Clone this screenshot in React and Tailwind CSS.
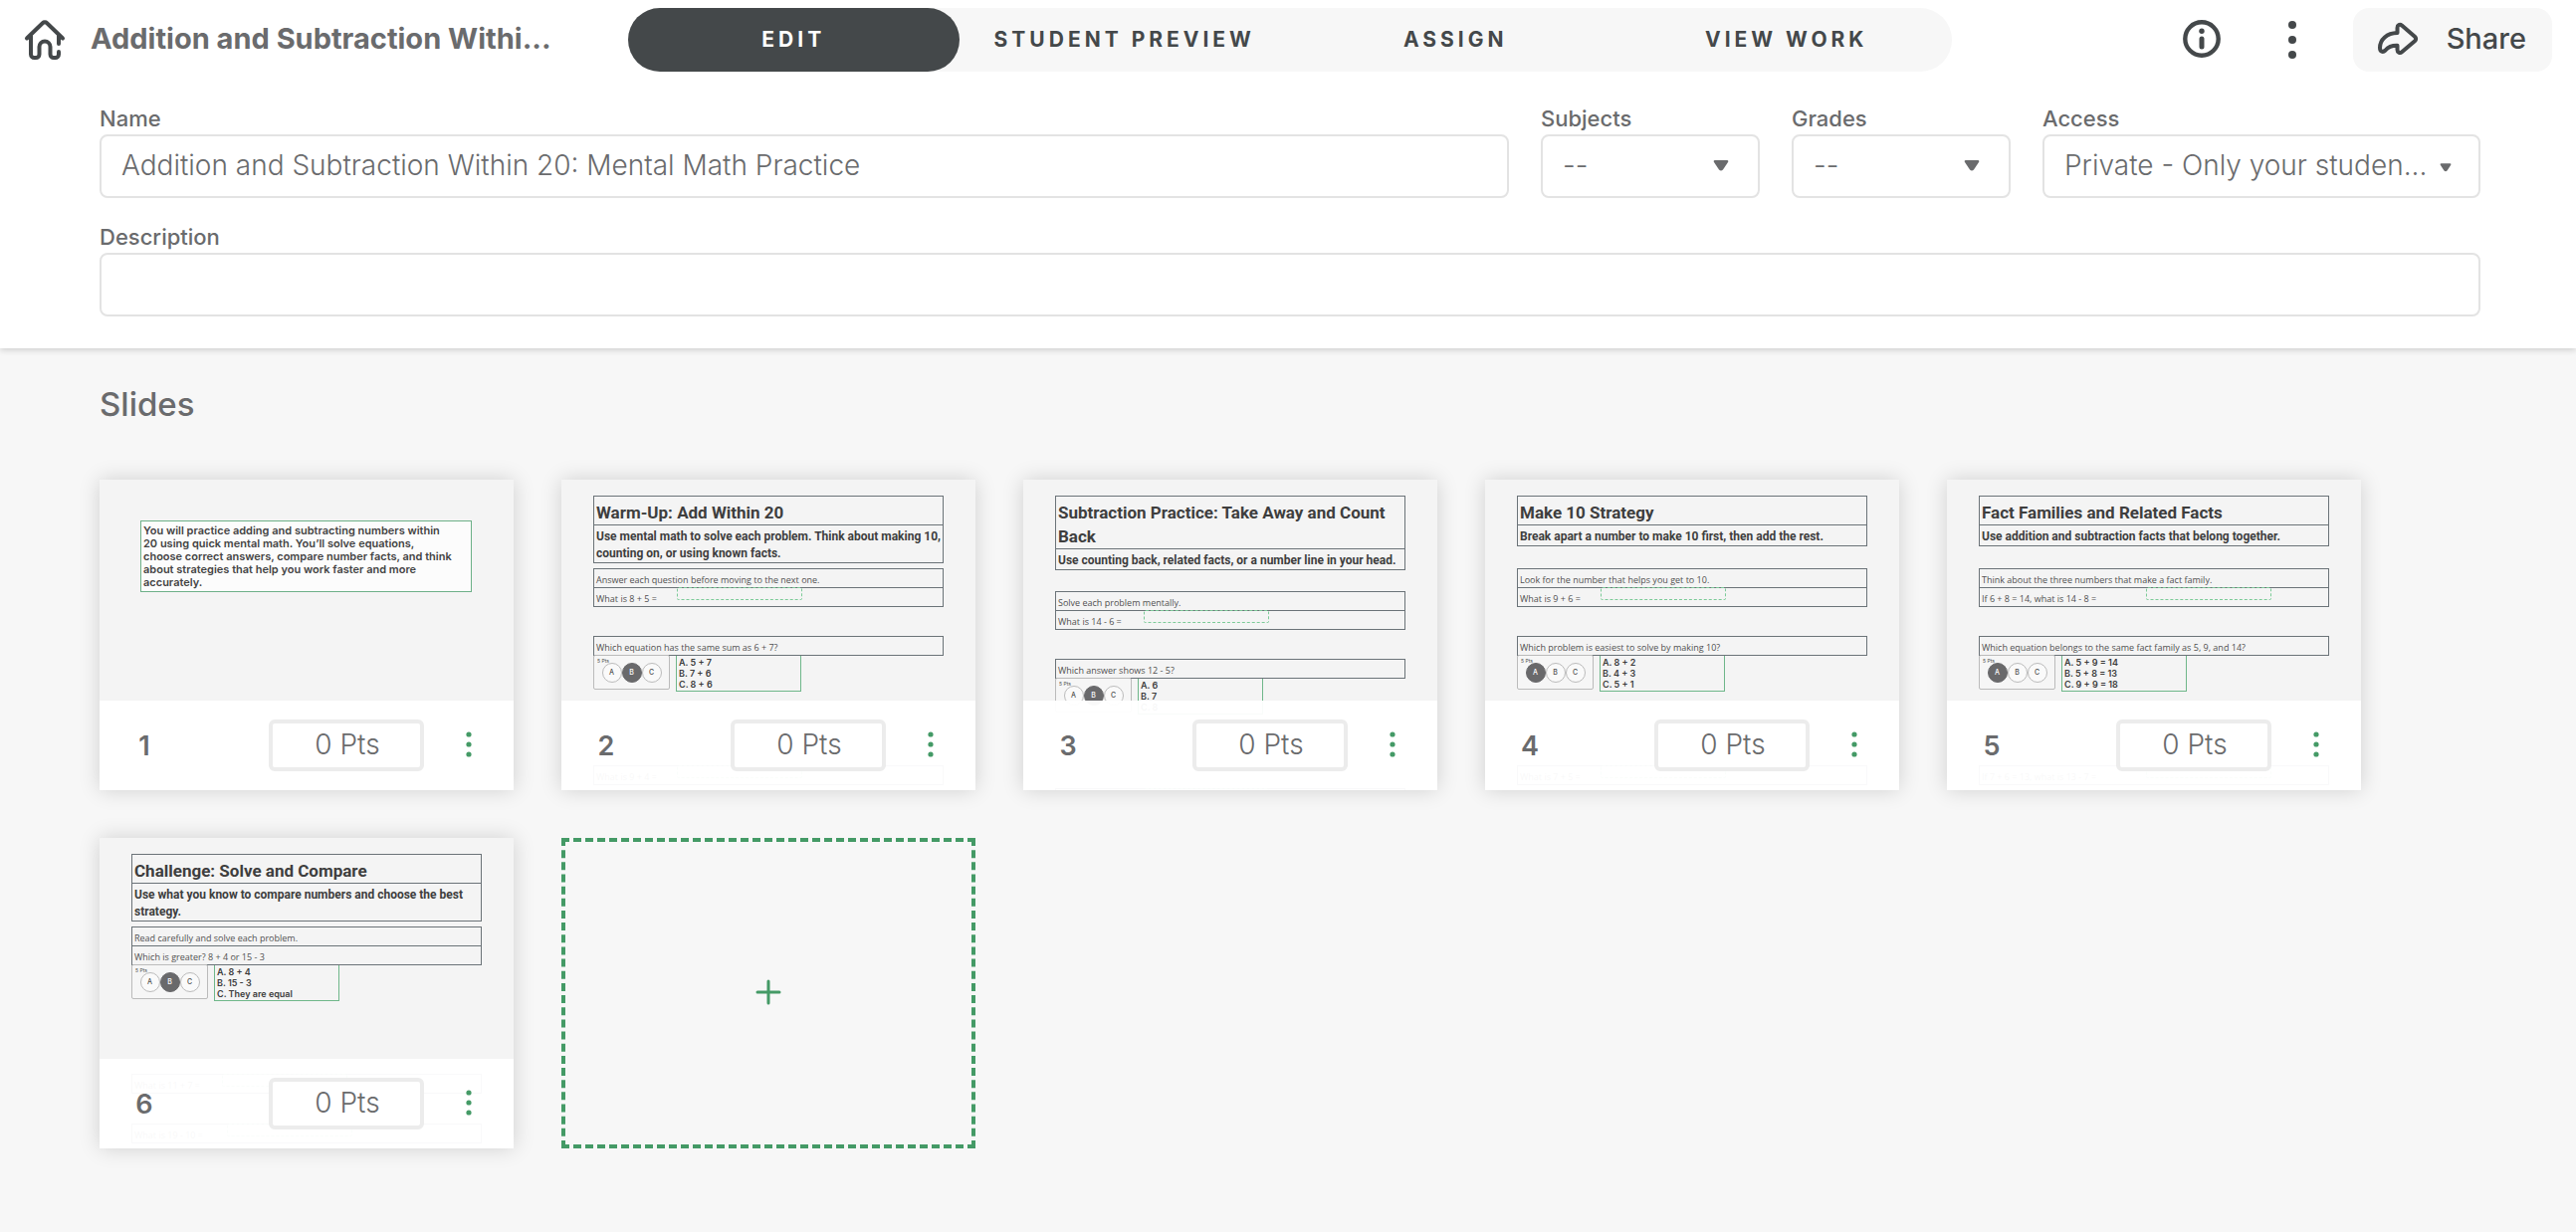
const gotham = 'font-["Inter","Open_Sans",sans-serif]';

const tabs = ["EDIT", "STUDENT PREVIEW", "ASSIGN", "VIEW WORK"];

const slides = [
  {
    intro: [
      "You will practice adding and subtracting numbers within",
      "20 using quick mental math. You’ll solve equations,",
      "choose correct answers, compare number facts, and think",
      "about strategies that help you work faster and more",
      "accurately.",
    ],
  },
  {
    title: "Warm-Up: Add Within 20",
    subtitle: "Use mental math to solve each problem. Think about making 10, counting on, or using known facts.",
    lead: "Answer each question before moving to the next one.",
    fill: "What is 8 + 5 =",
    blank: "left-[83px]",
    question: "Which equation has the same sum as 6 + 7?",
    picked: "B",
    answers: ["A. 5 + 7", "B. 7 + 6", "C. 8 + 6"],
    next: "What is 9 + 4 =",
  },
  {
    tall: true,
    title: "Subtraction Practice: Take Away and Count Back",
    subtitle: "Use counting back, related facts, or a number line in your head.",
    lead: "Solve each problem mentally.",
    fill: "What is 14 - 6 =",
    blank: "left-[88px]",
    question: "Which answer shows 12 - 5?",
    picked: "B",
    answers: ["A. 6", "B. 7", "C. 8"],
    next: "",
  },
  {
    title: "Make 10 Strategy",
    subtitle: "Break apart a number to make 10 first, then add the rest.",
    lead: "Look for the number that helps you get to 10.",
    fill: "What is 9 + 6 =",
    blank: "left-[83px]",
    question: "Which problem is easiest to solve by making 10?",
    picked: "A",
    answers: ["A. 8 + 2", "B. 4 + 3", "C. 5 + 1"],
    next: "What is 7 + 5 =",
  },
  {
    title: "Fact Families and Related Facts",
    subtitle: "Use addition and subtraction facts that belong together.",
    lead: "Think about the three numbers that make a fact family.",
    fill: "If 6 + 8 = 14, what is 14 - 8 =",
    blank: "left-[167px]",
    question: "Which equation belongs to the same fact family as 5, 9, and 14?",
    picked: "A",
    answers: ["A. 5 + 9 = 14", "B. 5 + 8 = 13", "C. 9 + 9 = 18"],
    next: "If 7 + 6 = 13, what is 13 - 7 =",
  },
  {
    title: "Challenge: Solve and Compare",
    subtitle: "Use what you know to compare numbers and choose the best strategy.",
    lead: "Read carefully and solve each problem.",
    question: "Which is greater? 8 + 4 or 15 - 3",
    picked: "B",
    answers: ["A. 8 + 4", "B. 15 - 3", "C. They are equal"],
    extra: "What is 11 + 7 =",
    next: "What is 19 - 10 =",
  },
];

function HomeIcon() {
  return (
    <svg viewBox="0 0 44 44" className="h-11 w-11" fill="none" stroke="currentColor" strokeWidth="4" strokeLinecap="round" strokeLinejoin="round" aria-hidden="true">
      <path d="M4 20.500 19.800 5.200a3.200 3.200 0 0 1 4.400 0L40 20.500" />
      <path d="M8 18v18.500a3.500 3.500 0 0 0 3.500 3.500h1.500a3.500 3.500 0 0 0 3.500-3.500V29a5.500 5.500 0 0 1 11 0v7.500a3.500 3.500 0 0 0 3.500 3.500h1.500a3.500 3.500 0 0 0 3.500-3.500V34" />
      <path d="M36 18v8" />
    </svg>
  );
}

function InfoIcon() {
  return (
    <svg viewBox="0 0 40 40" className="h-10 w-10" aria-hidden="true">
      <circle cx="20" cy="20" r="16.700" fill="none" stroke="currentColor" strokeWidth="4.400" />
      <circle cx="20" cy="12.300" r="2.700" fill="currentColor" />
      <path d="M20 20v8" stroke="currentColor" strokeWidth="5" strokeLinecap="round" />
    </svg>
  );
}

function MoreIcon() {
  return (
    <svg viewBox="0 0 10 40" className="h-10 w-[10px]" fill="currentColor" aria-hidden="true">
      <circle cx="5" cy="5" r="4" />
      <circle cx="5" cy="20" r="4" />
      <circle cx="5" cy="35" r="4" />
    </svg>
  );
}

function ShareIcon() {
  return (
    <svg viewBox="0 0 42 36" className="h-9 w-[42px]" fill="none" stroke="currentColor" strokeWidth="4" strokeLinejoin="round" aria-hidden="true">
      <path d="M20.500 12V7C20.500 4 23 3 25 4.600L38 15.800q2.300 2.200 0 4.400L25 31.200C23 33 20.500 31.500 20.500 29V24.800C15 24.600 11.500 26 8.500 29.500 6 32 3 31 3 27 3 18.500 10 12.300 20.500 12Z" />
    </svg>
  );
}

function Caret({ className }) {
  return (
    <svg viewBox="0 0 16 12" className={className} aria-hidden="true">
      <path d="M2 1h12q2 0 1 2L10 10.500q-2 2-4 0L1 3Q0 1 2 1Z" fill="#6a6b6d" />
    </svg>
  );
}

function Field({ id, label, className, children }) {
  return (
    <div className={className}>
      <label htmlFor={id} className="block h-7 text-[22px] leading-6 font-medium text-[#6a6b6d]">
        {label}
      </label>
      {children}
    </div>
  );
}

const box = "h-16 w-full rounded-lg border-2 border-[#e3e3e3] bg-white px-5 pb-0.5 text-[28px] font-light text-[#6a6b6d]";

function SelectField({ id, label, value, className, caret }) {
  return (
    <Field id={id} label={label} className={className}>
      <div className="relative">
        <select id={id} className={`${box} appearance-none`}>
          <option>{value}</option>
        </select>
        <Caret className={caret} />
      </div>
    </Field>
  );
}

function Row({ children, blank }) {
  return (
    <div className="relative flex h-5 items-end border border-[#6b7378] px-[2px] pb-px">
      <span>{children}</span>
      {blank && <span className={`absolute -top-px h-[13px] w-[126px] rounded-xs border border-dashed border-[#7ccb98] ${blank}`} />}
    </div>
  );
}

function Choices({ picked, answers }) {
  return (
    <div className="-mt-px flex items-start gap-[6px]">
      <div className="relative flex h-[35px] w-[77px] items-center justify-center rounded-[2px] border border-[#bbb] bg-[#f6f6f6]">
        <span className={`absolute top-0.5 left-[3px] text-[5px] leading-[6px] ${gotham}`}>5 Pts</span>
        {["A", "B", "C"].map((c) => (
          <span
            key={c}
            className={`flex size-5 items-center justify-center rounded-full border text-[7px] font-medium ${gotham} ${
              c === picked ? "border-[#69696b] bg-[#69696b] text-white" : "border-[#bbb] bg-[#fafafa]"
            }`}
          >
            {c}
          </span>
        ))}
      </div>
      <div className={`h-[37px] w-[126px] border border-[#6fb78a] px-[2px] pt-px text-[9px] leading-[11px] font-semibold text-[#3c3c3c] ${gotham}`}>
        {answers.map((a) => (
          <p key={a}>{a}</p>
        ))}
      </div>
    </div>
  );
}

function SlideCanvas({ slide }) {
  if (slide.intro) {
    return (
      <div className="pt-[41px] pr-[42px] pl-[41px]">
        <div className={`border border-[#6db088] bg-[#fcfcfc] px-[2px] pt-[3px] pb-[2px] text-[11px] leading-[13px] font-semibold whitespace-nowrap text-[#444] ${gotham}`}>
          {slide.intro.map((line) => (
            <p key={line}>{line}</p>
          ))}
        </div>
      </div>
    );
  }
  return (
    <div className='px-8 pt-4 font-["Open_Sans",sans-serif] text-[9px] leading-[12px] text-[#505050]'>
      <div className={`font-["Roboto",sans-serif] font-bold text-[#3e3e3e] ${slide.tall ? "h-24" : "h-[73px]"}`}>
        <h3 className="border border-[#6b7378] px-[2px] pt-1 text-[17px] leading-6">{slide.title}</h3>
        <p className="-mt-px border border-[#6b7378] px-[2px] pt-[3px] text-[12px] leading-[17px]">{slide.subtitle}</p>
      </div>
      <Row>{slide.lead}</Row>
      {slide.fill && (
        <div className="-mt-px mb-[29px]">
          <Row blank={slide.blank}>{slide.fill}</Row>
        </div>
      )}
      <div className={slide.fill ? "" : "-mt-px"}>
        <Row>{slide.question}</Row>
      </div>
      <Choices picked={slide.picked} answers={slide.answers} />
      {slide.extra && (
        <div className="mt-[73px] mb-[30px]">
          <Row blank="left-[90px]">{slide.extra}</Row>
        </div>
      )}
      <div className={slide.extra ? "" : "mt-[74px]"}>
        <Row blank={slide.blank || "left-[95px]"}>{slide.next}</Row>
      </div>
    </div>
  );
}

function SlideCard({ slide, number }) {
  return (
    <article className="relative h-[312px] w-[416px] overflow-hidden bg-[#f4f4f4]">
      <SlideCanvas slide={slide} />
      <div className="absolute inset-x-0 bottom-0 flex h-[90px] items-center bg-white/96 text-[#6a6b6d]">
        <span className="w-[90px] text-center text-[27px] leading-none font-semibold">{number}</span>
        <input
          aria-label={`Points for slide ${number}`}
          defaultValue="0 Pts"
          className="ml-20 h-[52px] w-[156px] rounded-md border-4 border-[#ececec] bg-white pb-0.5 pl-0.5 text-center text-[28px] font-light"
        />
        <button aria-label={`Slide ${number} options`} className="ml-[35px] flex h-10 w-5 items-center justify-center pb-[3px] text-[#449a66]">
          <svg viewBox="0 0 6 26" className="h-[26px] w-[6px]" fill="currentColor" aria-hidden="true">
            <circle cx="3" cy="3" r="2.600" />
            <circle cx="3" cy="13" r="2.600" />
            <circle cx="3" cy="23" r="2.600" />
          </svg>
        </button>
      </div>
    </article>
  );
}

export default function App() {
  return (
    <div className={`min-h-screen bg-[#f7f7f7] ${gotham}`}>
      <div className="relative bg-white pb-8 shadow-[0_2px_6px_rgba(0,0,0,0.16)]">
        <header className="flex h-20 items-center pr-6 pl-[23px] text-[#44484a]">
          <a href="#home" aria-label="Home">
            <HomeIcon />
          </a>
          <h1 className="ml-6 w-[540px] pb-0.5 text-[29px] font-bold whitespace-nowrap text-[#6a6b6d]">Addition and Subtraction Withi...</h1>
          <nav className="grid h-16 w-[1330px] grid-cols-4 rounded-full bg-[#f7f7f7]">
            {tabs.map((t, i) => (
              <button key={t} className={`rounded-full text-[21px] font-bold tracking-[4px] ${i === 0 ? "bg-[#44484a] text-white" : ""}`}>
                {t}
              </button>
            ))}
          </nav>
          <div className="ml-auto flex items-center">
            <button aria-label="Information" className="mr-[66px] pb-0.5">
              <InfoIcon />
            </button>
            <button aria-label="More options" className="mr-[56px] pb-px">
              <MoreIcon />
            </button>
            <button className="flex h-16 items-center gap-7 rounded-2xl bg-[#f7f7f7] pr-[26px] pb-0.5 pl-6 text-[29px] font-medium">
              <ShareIcon />
              Share
            </button>
          </div>
        </header>

        <form className="flex flex-col gap-[27px] pt-[27px] pr-24 pl-25">
          <div className="flex gap-8">
            <Field id="name" label="Name" className="min-w-0 flex-1">
              <input id="name" defaultValue="Addition and Subtraction Within 20: Mental Math Practice" className={box} />
            </Field>
            <SelectField id="subjects" label="Subjects" value="--" className="w-[220px]" caret="pointer-events-none absolute top-[25px] right-[31px] h-3 w-4" />
            <SelectField id="grades" label="Grades" value="--" className="w-[220px]" caret="pointer-events-none absolute top-[25px] right-[31px] h-3 w-4" />
            <SelectField
              id="access"
              label="Access"
              value="Private - Only your studen..."
              className="w-[440px]"
              caret="pointer-events-none absolute top-7 right-[29px] h-[10px] w-3"
            />
          </div>
          <Field id="description" label="Description">
            <input id="description" className={box} />
          </Field>
        </form>
      </div>

      <main className="pt-9 pr-24 pb-21 pl-25">
        <h2 className="text-[33px] leading-10 font-medium text-[#6a6b6d]">Slides</h2>
        <ul className="mt-14 flex flex-wrap gap-12">
          {slides.map((s, i) => (
            <li key={i} className="shadow-[0_0_20px_rgba(0,0,0,0.16)]">
              <SlideCard slide={s} number={i + 1} />
            </li>
          ))}
          <li>
            <button aria-label="Add slide" className="flex h-[312px] w-[416px] items-center justify-center border-4 border-dashed border-[#449a66] pb-[3px] text-[#449a66]">
              <svg viewBox="0 0 26 26" className="size-[26px]" stroke="currentColor" strokeWidth="3" strokeLinecap="round" aria-hidden="true">
                <path d="M13 2v22M2 13h22" />
              </svg>
            </button>
          </li>
        </ul>
      </main>
    </div>
  );
}
